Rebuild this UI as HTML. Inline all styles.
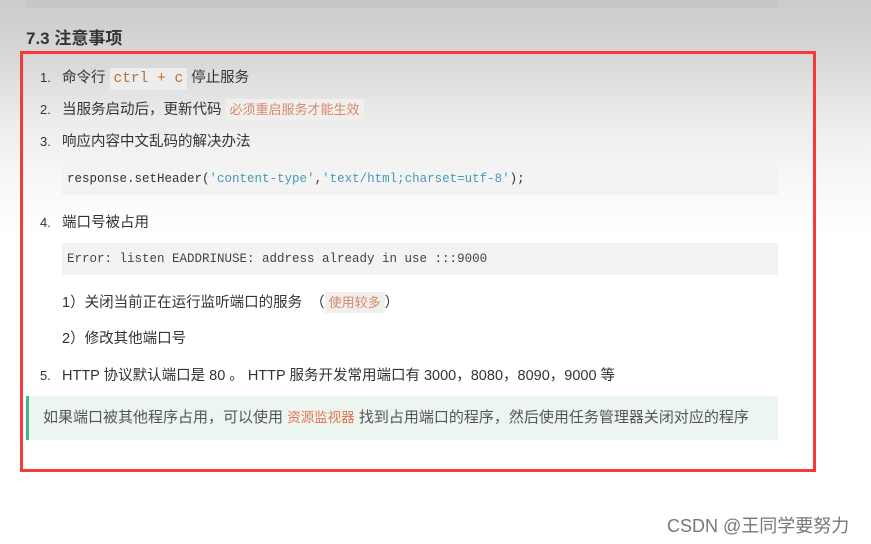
<!DOCTYPE html>
<html><head><meta charset="utf-8"><style>
body{margin:0;width:871px;height:544px;overflow:hidden;position:relative;
background:linear-gradient(#cbcbcb 0px,#d8d8d8 60px,#ececec 120px,#f8f8f8 180px,#fff 240px,#fff);
font-family:"Liberation Sans","Noto Sans CJK SC",sans-serif;color:#333;}
.a{position:absolute;white-space:nowrap}
.topbar{left:26px;top:0;width:752px;height:8px;background:#c6c6c6}
.box{left:20px;top:51px;width:790px;height:415px;border:3px solid #f43b3b}
h3{position:absolute;left:26px;top:24px;margin:0;font-size:17px;font-weight:bold;color:#333}
.li{font-size:14.5px;color:#333}
.n{display:inline-block;width:22px;font-size:13px}
code{font-family:"Liberation Mono",monospace;}
.ic{background:#ededed;color:#b5703f;padding:3px 4px;font-size:14.5px}
.tag{background:#f1efed;color:#d58a6a;font-size:13px;padding:3px 4px}
.pre{background:#f3f3f3;font-family:"Liberation Mono",monospace;font-size:12.5px;color:#333;padding-left:5px;box-sizing:border-box;line-height:32px}
.s{color:#4a97b8}
.tip{left:26px;top:396px;width:752px;height:44px;background:#edf5f0;border-left:3px solid #42b983;box-sizing:border-box;font-size:15px;color:#555;line-height:44px;padding-left:14px}
</style></head><body>
<div class="a topbar"></div>
<h3>7.3 注意事项</h3>
<div class="a box"></div>
<div class="a li" style="left:40px;top:66px"><span class="n">1.</span>命令行 <code class="ic">ctrl + c</code> 停止服务</div>
<div class="a li" style="left:40px;top:98px"><span class="n">2.</span>当服务启动后，更新代码 <span class="tag">必须重启服务才能生效</span></div>
<div class="a li" style="left:40px;top:130px"><span class="n">3.</span>响应内容中文乱码的解决办法</div>
<div class="a pre" style="left:62px;top:163px;width:716px;height:32px">response.setHeader(<span class="s">'content-type'</span>,<span class="s">'text/html;charset=utf-8'</span>);</div>
<div class="a li" style="left:40px;top:211px"><span class="n">4.</span>端口号被占用</div>
<div class="a pre" style="left:62px;top:243px;width:716px;height:32px;color:#444">Error: listen EADDRINUSE: address already in use :::9000</div>
<div class="a li" style="left:62px;top:291px">1）关闭当前正在运行监听端口的服务 &nbsp;（<span class="tag">使用较多</span>）</div>
<div class="a li" style="left:62px;top:327px">2）修改其他端口号</div>
<div class="a li" style="left:40px;top:364px"><span class="n">5.</span>HTTP 协议默认端口是 80 。 HTTP 服务开发常用端口有 3000，8080，8090，9000 等</div>
<div class="a tip">如果端口被其他程序占用，可以使用 <span style="color:#e5744f;font-size:13.5px">资源监视器</span> 找到占用端口的程序，然后使用任务管理器关闭对应的程序</div>
<div class="a" style="left:667px;top:512px;font-size:18px;color:#777">CSDN @王同学要努力</div>
</body></html>
